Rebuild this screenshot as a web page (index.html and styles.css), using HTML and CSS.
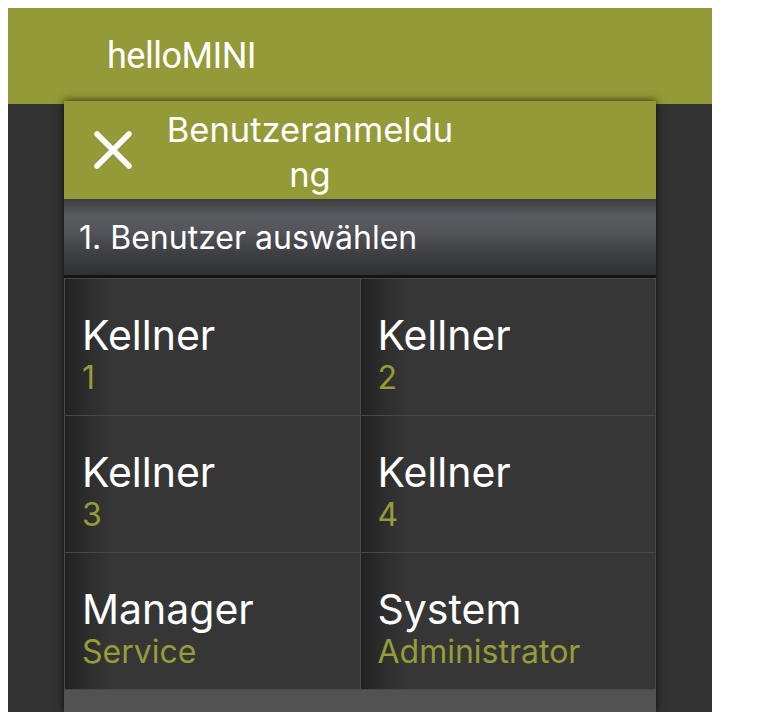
FILE: index.html
```html
<!DOCTYPE html>
<html lang="de">
<head>
  <meta charset="UTF-8" />
  <meta name="viewport" content="width=device-width, initial-scale=1.0" />
  <title>helloMINI - Benutzeranmeldung</title>
  <link rel="stylesheet" href="styles.css">
</head>
<body>
  <div class="app">
    <header class="topbar">
      <span class="app-title">helloMINI</span>
    </header>

    <main class="stage">
      <section class="dialog">
        <div class="dialog-head">
          <button class="close-btn" type="button" aria-label="Schließen">
            <svg width="42" height="42" viewBox="0 0 42 42">
              <path d="M5 5 L37 37 M37 5 L5 37" stroke="#fff" stroke-width="5.5" stroke-linecap="round" fill="none"/>
            </svg>
          </button>
          <h2 class="dialog-title">Benutzeranmeldung</h2>
        </div>

        <div class="step-bar">1. Benutzer auswählen</div>

        <div class="user-grid">
          <button class="user-tile" type="button">
            <span class="user-name">Kellner</span>
            <span class="user-role">1</span>
          </button>
          <button class="user-tile" type="button">
            <span class="user-name">Kellner</span>
            <span class="user-role">2</span>
          </button>
          <button class="user-tile" type="button">
            <span class="user-name">Kellner</span>
            <span class="user-role">3</span>
          </button>
          <button class="user-tile" type="button">
            <span class="user-name">Kellner</span>
            <span class="user-role">4</span>
          </button>
          <button class="user-tile" type="button">
            <span class="user-name">Manager</span>
            <span class="user-role">Service</span>
          </button>
          <button class="user-tile" type="button">
            <span class="user-name">System</span>
            <span class="user-role">Administrator</span>
          </button>
        </div>
      </section>
    </main>
  </div>
</body>
</html>
```

FILE: styles.css
```css
html, body {
  overflow: hidden;
}
body {
  margin: 8px 8px 0;
  background: #fff;
  font-family: 'Inter', 'Liberation Sans', sans-serif;
  color: #fff;
}
.app {
  width: 704px;
  height: 704px;
  display: flex;
  flex-direction: column;
  overflow: hidden;
}
.topbar {
  height: 96px;
  flex-shrink: 0;
  background-color: #949a37;
  display: flex;
  align-items: center;
  padding-left: 99px;
}
.app-title {
  font-family: 'Roboto', 'Liberation Sans', sans-serif;
  font-size: 36px;
  font-weight: 400;
  letter-spacing: -0.5px;
}
.stage {
  flex: 1;
  position: relative;
  background-color: #333;
}

/* Modal */
.dialog {
  position: absolute;
  top: -3px;
  left: 56px;
  bottom: 0;
  width: 592px;
  display: flex;
  flex-direction: column;
  background-color: #525252;
  box-shadow: 0 0 8px rgba(0, 0, 0, 0.75);
}
.dialog-head {
  height: 98px;
  flex-shrink: 0;
  background-color: #949a37;
  display: flex;
  align-items: center;
}
.close-btn {
  width: 98px;
  height: 98px;
  padding: 0;
  border: none;
  background: none;
  display: flex;
  align-items: center;
  justify-content: center;
  cursor: pointer;
}
.dialog-title {
  width: 296px;
  margin: 0;
  padding-top: 3px;
  font-size: 34.5px;
  font-weight: 400;
  line-height: 45px;
  text-align: center;
  word-break: break-all;
}
.step-bar {
  height: 76px;
  flex-shrink: 0;
  display: flex;
  align-items: center;
  padding-left: 15px;
  font-size: 32px;
  background: linear-gradient(to bottom, #3d3e42 0, #5a5b60 16px, #55565b 30px, #3e3f43 55px, #2f3033 100%);
  border-bottom: 3px solid #141414;
}

/* User tiles */
.user-grid {
  display: grid;
  grid-template-columns: 1fr 1fr;
  grid-auto-rows: 136px;
  gap: 1px;
  padding: 1px;
  background-color: #484848;
}
.user-tile {
  display: flex;
  flex-direction: column;
  align-items: flex-start;
  padding: 32px 0 0 17px;
  border: none;
  background: linear-gradient(to right, #212121 0, #2b2b2b 18px, #363636 46px, #363636 100%);
  font-family: inherit;
  color: #fff;
  text-align: left;
  cursor: pointer;
}
.user-name {
  font-size: 41px;
  line-height: 48px;
}
.user-role {
  font-size: 32px;
  line-height: 37px;
  color: #959c38;
}
```
